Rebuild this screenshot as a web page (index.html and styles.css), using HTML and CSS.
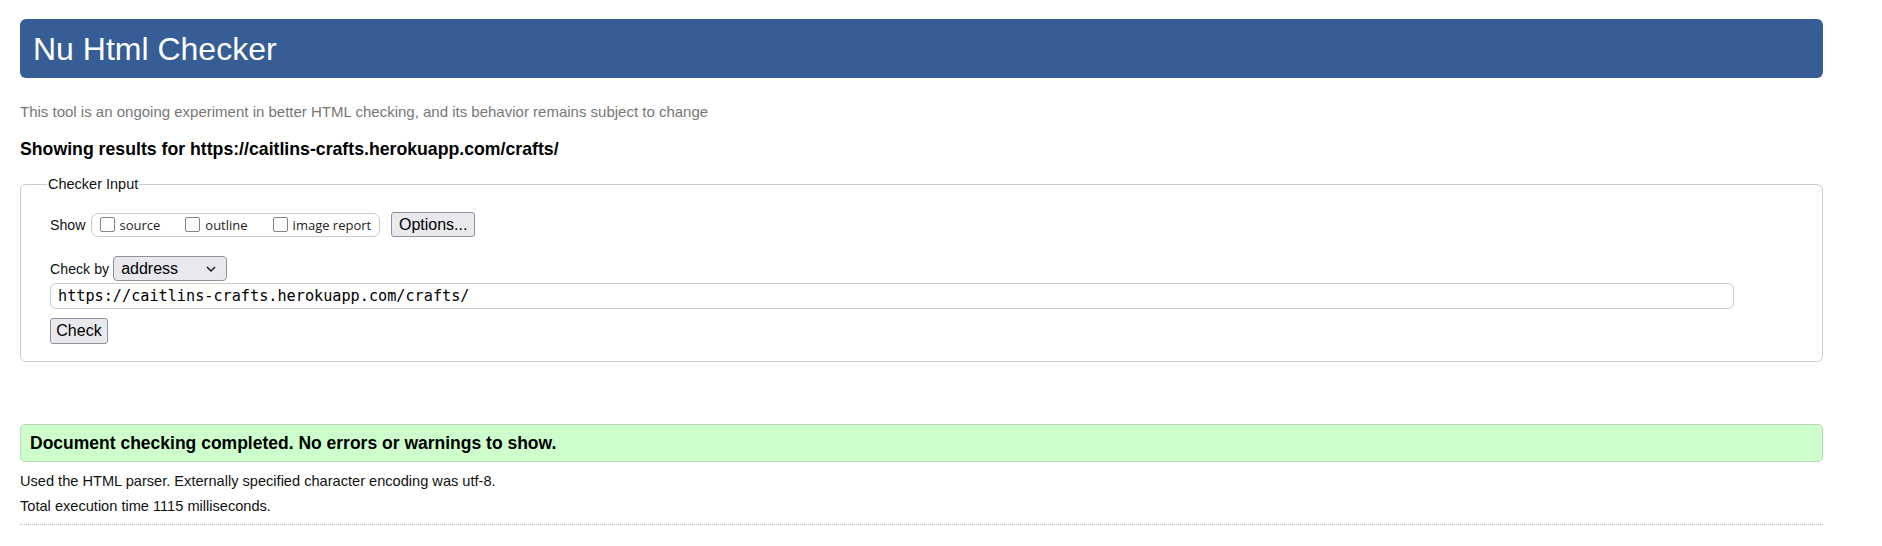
FILE: index.html
```html
<!DOCTYPE html>
<html lang="en">
<head>
<meta charset="utf-8">
<title>Showing results for https://caitlins-crafts.herokuapp.com/crafts/ - Nu Html Checker</title>
<link rel="stylesheet" href="styles.css">
</head>
<body>
  <header class="masthead">
    <h1 class="masthead-title">Nu Html Checker</h1>
  </header>
  <p class="tagline">This tool is an ongoing experiment in better HTML checking, and its behavior remains subject to change</p>
  <h2 class="results-title">Showing results for https://caitlins-crafts.herokuapp.com/crafts/</h2>

  <fieldset class="checker">
    <legend class="checker-legend">Checker Input</legend>
    <div class="show-row">
      <span class="field-label">Show</span>
      <div class="toggles">
        <label class="toggle"><span class="box"></span><span class="toggle-text">source</span></label>
        <label class="toggle"><span class="box"></span><span class="toggle-text">outline</span></label>
        <label class="toggle"><span class="box"></span><span class="toggle-text">image report</span></label>
      </div>
      <button class="btn btn-options" type="button">Options...</button>
    </div>
    <div class="by-row">
      <span class="field-label">Check by</span>
      <div class="select">
        <span class="select-value">address</span>
        <svg class="chevron" width="10" height="6" viewBox="0 0 10 6"><polyline points="1,1 5,5 9,1" fill="none" stroke="#111" stroke-width="1.4"/></svg>
      </div>
    </div>
    <input class="url-input" type="url" value="https://caitlins-crafts.herokuapp.com/crafts/">
    <div class="check-row">
      <button class="btn btn-check" type="submit">Check</button>
    </div>
  </fieldset>

  <div class="success">Document checking completed. No errors or warnings to show.</div>
  <p class="details">Used the HTML parser. Externally specified character encoding was utf-8.</p>
  <p class="details details-time">Total execution time 1115 milliseconds.</p>
  <hr class="end-rule">
</body>
</html>
```

FILE: styles.css
```css
html, body {
  background: #fff;
}

body {
  margin: 0;
  padding: 19px 59px 0 20px;
  font-family: "Liberation Sans", Arial, sans-serif;
  color: #000;
}

.masthead {
  height: 59px;
  background: #365d95;
  border-radius: 6px;
  color: #fff;
  display: flex;
  align-items: center;
  padding-left: 13px;
}

.masthead-title {
  margin: 0;
  font-size: 32px;
  font-weight: normal;
  line-height: 1;
}

.tagline {
  margin: 25px 0 0;
  color: #777;
  font-size: 15px;
  line-height: 18px;
}

.results-title {
  margin: 17px 0 0;
  font-size: 17.7px;
  font-weight: bold;
  line-height: 22px;
}

.checker {
  margin: 15px 0 0;
  padding: 0 28px 17px 29px;
  border: 1px solid #ccc;
  border-radius: 6px;
  min-width: 0;
}

.checker-legend {
  font-size: 14.5px;
  line-height: 18px;
  padding: 0 1px;
  margin-left: -3px;
  color: #111;
}

.show-row {
  margin-top: 19px;
  height: 25px;
  display: flex;
  align-items: center;
}

.field-label {
  font-size: 14.2px;
  color: #111;
}

.toggles {
  margin-left: 5px;
  height: 22px;
  border: 1px solid #ccc;
  border-radius: 7px;
  display: flex;
  align-items: center;
  padding: 0 8px 0 8px;
  gap: 25px;
}

.toggle {
  display: flex;
  align-items: center;
  gap: 5px;
}

.box {
  width: 13px;
  height: 13px;
  border: 1px solid #858585;
  border-radius: 2px;
  background: #fff;
}

.toggle-text {
  font-family: "Open Sans", "Noto Sans", sans-serif;
  font-size: 13px;
  color: #222;
}

.btn {
  font-family: "Liberation Sans", Arial, sans-serif;
  font-size: 16px;
  color: #000;
  background: #e9e9ed;
  border: 1px solid #8f8f9d;
  border-radius: 3px;
  height: 25px;
  padding: 0;
}

.btn-options {
  margin-left: 11px;
  width: 84px;
}

.by-row {
  margin-top: 19px;
  height: 25px;
  display: flex;
  align-items: center;
}

.select {
  margin-left: 4px;
  height: 23px;
  border: 1px solid #8f8f9d;
  border-radius: 4px;
  background: #e9e9ed;
  display: flex;
  align-items: center;
  justify-content: space-between;
  padding: 0 10px 0 7px;
  box-sizing: content-box;
  width: 95px;
}

.select-value {
  font-size: 16px;
}

.url-input {
  display: block;
  margin: 2px 0 0;
  width: calc(100% - 60px);
  height: 26px;
  box-sizing: border-box;
  border: 1px solid #ccc;
  border-radius: 6px;
  padding: 0 7px;
  font-family: "DejaVu Sans Mono", "Liberation Mono", monospace;
  font-size: 15.2px;
  color: #000;
  background: #fff;
}

.check-row {
  margin-top: 9px;
  display: flex;
}

.btn-check {
  width: 58px;
  height: 26px;
}

.success {
  margin-top: 62px;
  height: 36px;
  border: 1px solid #bcd6bc;
  border-radius: 5px;
  background: #ccffcc;
  display: flex;
  align-items: center;
  padding-left: 9px;
  font-size: 17.5px;
  font-weight: bold;
}

.details {
  margin: 9px 0 0;
  font-size: 14.6px;
  line-height: 20px;
  color: #111;
}

.details-time {
  margin-top: 5px;
}

.end-rule {
  margin: 8px 0 0;
  border: 0;
  border-top: 1px dotted #b4b4b4;
  height: 0;
}
```
